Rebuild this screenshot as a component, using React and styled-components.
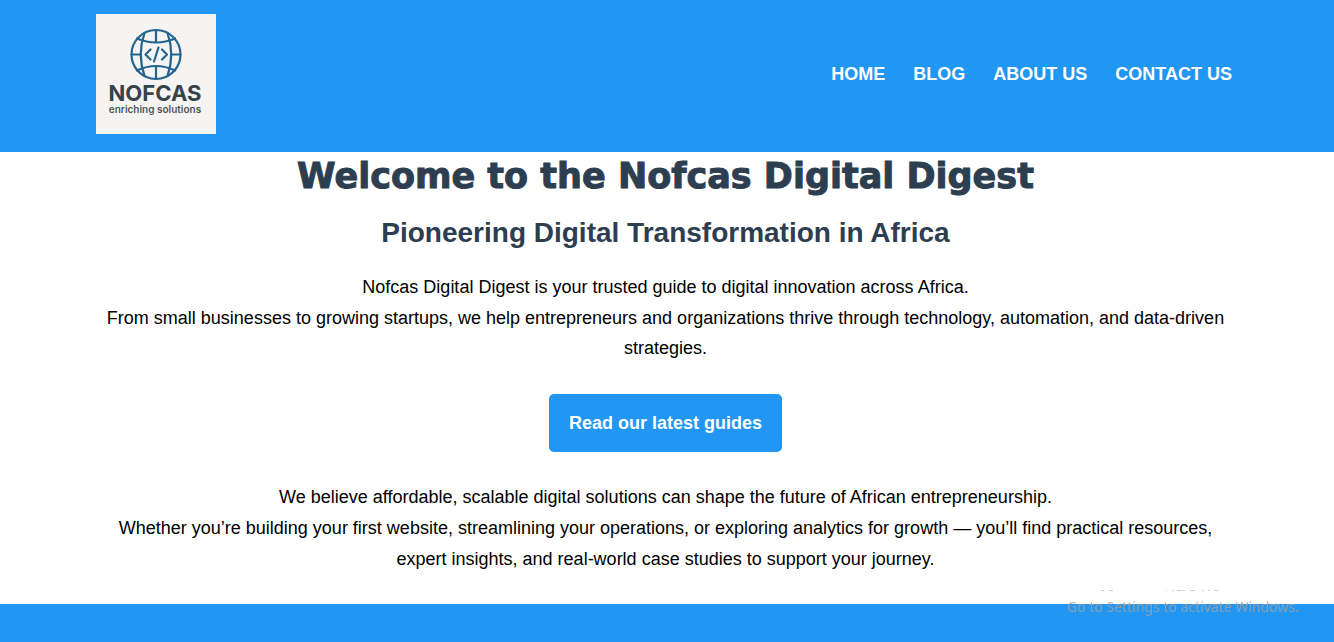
import React from "react";
import styled, { createGlobalStyle } from "styled-components";

const BLUE = "#2196f3";
const NAVY = "#2c3e50";

const GlobalStyle = createGlobalStyle`
  *, *::before, *::after { box-sizing: border-box; }
  body {
    margin: 0;
    background: #fff;
    color: #000;
    font-family: Arial, "Liberation Sans", sans-serif;
    font-size: 18px;
    line-height: 1.7;
  }
`;

const Page = styled.div`
  display: flex;
  flex-direction: column;
  min-height: 100vh;
`;

const Header = styled.header`
  display: flex;
  align-items: flex-start;
  justify-content: space-between;
  padding: 14px 99px 18px 96px;
  background: ${BLUE};
`;

const LogoLink = styled.a`
  display: block;
  width: 120px;
  height: 120px;
  background: #f5f4f2;
`;

const LogoArt = styled.svg`
  display: block;
`;

const Nav = styled.nav`
  align-self: center;
`;

const NavList = styled.ul`
  display: flex;
  gap: 28px;
  margin: 0;
  padding: 0 3px 0 0;
  list-style: none;
`;

const NavLink = styled.a`
  color: #fff;
  font-weight: 700;
  text-decoration: none;
  text-transform: uppercase;
`;

const Main = styled.main`
  padding: 0 99px 30px 96px;
  text-align: center;
`;

const Title = styled.h1`
  margin: 0;
  color: ${NAVY};
  font-family: "Arial Black", "DejaVu Sans", sans-serif;
  font-size: 35px;
  font-weight: 900;
  line-height: 48px;
  -webkit-text-stroke: 1px ${NAVY};
`;

const Subtitle = styled.h2`
  margin: 9px 0 15px;
  color: ${NAVY};
  font-size: 28px;
  font-weight: 700;
  line-height: 48px;
`;

const Paragraph = styled.p`
  margin: 0;
`;

const GuideLink = styled.a`
  display: inline-block;
  margin: 30px 0;
  padding: 14px 20px;
  border-radius: 5px;
  background: ${BLUE};
  color: #fff;
  font-weight: 700;
  text-decoration: none;
`;

const Footer = styled.footer`
  flex: 1;
  min-height: 38px;
  background: ${BLUE};
`;

const Watermark = styled.div`
  position: fixed;
  right: 35px;
  bottom: 25px;
  color: rgba(160, 160, 160, 0.8);
  font-family: "Segoe UI", "Noto Sans", sans-serif;
  font-size: 14px;
  line-height: 20px;
  pointer-events: none;
`;

const WatermarkTrace = styled.svg`
  position: absolute;
  left: 32px;
  bottom: 25px;
`;

function Logo() {
  return (
    <LogoArt width="120" height="120" viewBox="0 0 120 120" role="img" aria-label="Nofcas enriching solutions">
      <g fill="none" stroke="#246490" strokeWidth="2.2" strokeLinecap="round" strokeLinejoin="round">
        <circle cx="60" cy="40.500" r="24.500" />
        <path d="M60 16v12M60 52v13M35.500 40.500H45M75 40.500h9.500" />
        <path d="M48.500 19Q41 40.500 48.500 62M71.500 19Q79 40.500 71.500 62" />
        <path d="M41 24.500q19 8 38 0M41 56.500q19-9 38 0" />
        <path d="M54.500 35.500l-5 5 5 5M66 35.500l5 5-5 5M62.500 33.500l-4.500 14" />
      </g>
      <text x="59" y="87" textAnchor="middle" fill="#374249" fontFamily="Inter, sans-serif" fontSize="22" fontWeight="700">NOFCAS</text>
      <text x="59" y="99" textAnchor="middle" fill="#4c555a" fontFamily="Inter, sans-serif" fontSize="10" fontWeight="600">enriching solutions</text>
    </LogoArt>
  );
}

const links = ["Home", "Blog", "About us", "Contact us"];

export default function App() {
  return (
    <Page>
      <GlobalStyle />
      <Header>
        <LogoLink href="#home"><Logo /></LogoLink>
        <Nav>
          <NavList>
            {links.map((label) => (
              <li key={label}><NavLink href="#">{label}</NavLink></li>
            ))}
          </NavList>
        </Nav>
      </Header>
      <Main>
        <Title>Welcome to the Nofcas Digital Digest</Title>
        <Subtitle>Pioneering Digital Transformation in Africa</Subtitle>
        <Paragraph>
          Nofcas Digital Digest is your trusted guide to digital innovation across Africa.
          <br />
          From small businesses to growing startups, we help entrepreneurs and organizations thrive through
          technology, automation, and data-driven strategies.
        </Paragraph>
        <GuideLink href="#guides">Read our latest guides</GuideLink>
        <Paragraph>
          We believe affordable, scalable digital solutions can shape the future of African entrepreneurship.
          <br />
          Whether you’re building your first website, streamlining your operations, or exploring analytics for
          growth — you’ll find practical resources, expert insights, and real-world case studies to support your
          journey.
        </Paragraph>
      </Main>
      <Footer />
      <Watermark>
        <WatermarkTrace width="120" height="2" viewBox="0 0 120 2" aria-hidden="true">
          <path
            d="M2 .5h3M10 .5h4M67 .5h1M73 .5h2M78 .5h5M84 .5h2M91 .5h5M103 .5h2M109 .5h2M115 .5h4"
            stroke="#cfcfcf"
            fill="none"
          />
        </WatermarkTrace>
        Go to Settings to activate Windows.
      </Watermark>
    </Page>
  );
}
